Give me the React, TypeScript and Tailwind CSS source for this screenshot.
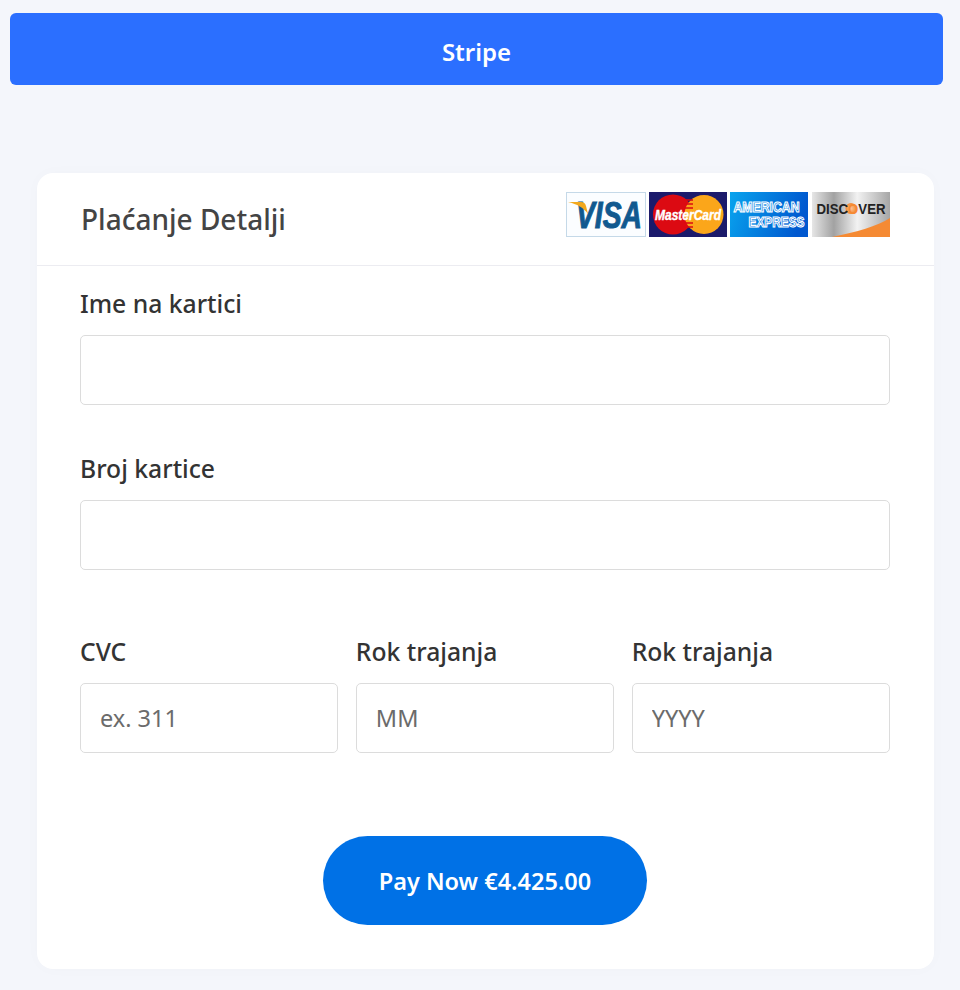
import React from "react";

function Visa() {
  return (
    <svg width="80" height="45" viewBox="0 0 80 45" className="block overflow-visible">
      <rect x="0.5" y="0.5" width="79" height="44" fill="#fbfdff" stroke="#c5d9e8" />
      <text x="43" y="36" textAnchor="middle" fontFamily="'Liberation Sans', sans-serif" fontWeight="700" fontStyle="italic" fontSize="36" textLength="66" lengthAdjust="spacingAndGlyphs" fill="#11598f" stroke="#11598f" strokeWidth="1">VISA</text>
      <path d="M2 10 H15 C18 10 19 11 20 14 L22 22 C18 16 11 12 2 10Z" fill="#f2a81d" />
    </svg>
  );
}

function MasterCard() {
  return (
    <svg width="78" height="45" viewBox="0 0 78 45" className="block overflow-visible">
      <rect width="78" height="45" fill="#1b1a6b" />
      <circle cx="24" cy="22.5" r="20" fill="#dc0a12" />
      <circle cx="55" cy="22.5" r="19.5" fill="#fba61a" />
      <path d="M35 8h9M35 12h9M35 16h9M35 31h9M35 35h9" stroke="#dc0a12" strokeWidth="1.6" />
      <text x="39" y="28" textAnchor="middle" fontFamily="'Liberation Sans', sans-serif" fontWeight="700" fontStyle="italic" fontSize="14" textLength="66" lengthAdjust="spacingAndGlyphs" fill="#ffffff" stroke="#ffffff" strokeWidth="0.4">MasterCard</text>
    </svg>
  );
}

function Amex() {
  return (
    <svg width="78" height="45" viewBox="0 0 78 45" className="block overflow-visible">
      <defs>
        <linearGradient id="amexbg" x1="0" y1="0" x2="1" y2="0.2">
          <stop offset="0" stopColor="#09a4ee" />
          <stop offset="1" stopColor="#0058cf" />
        </linearGradient>
      </defs>
      <rect width="78" height="45" fill="url(#amexbg)" />
      <text x="36.5" y="20" textAnchor="middle" fontFamily="'Liberation Sans', sans-serif" fontWeight="700" fontSize="14" textLength="66" lengthAdjust="spacingAndGlyphs" fill="#1283e4" stroke="#ffffff" strokeWidth="1.1">AMERICAN</text>
      <text x="46.5" y="35" textAnchor="middle" fontFamily="'Liberation Sans', sans-serif" fontWeight="700" fontSize="14" textLength="56" lengthAdjust="spacingAndGlyphs" fill="#0a6ddc" stroke="#ffffff" strokeWidth="1.1">EXPRESS</text>
    </svg>
  );
}

function Discover() {
  return (
    <svg width="78" height="45" viewBox="0 0 78 45" className="block overflow-visible">
      <defs>
        <linearGradient id="discbg" x1="0" y1="0" x2="1" y2="0">
          <stop offset="0" stopColor="#e6e6e6" />
          <stop offset="0.28" stopColor="#a2a2a2" />
          <stop offset="0.58" stopColor="#f2f2f2" />
          <stop offset="1" stopColor="#a6a6a6" />
        </linearGradient>
        <radialGradient id="discO">
          <stop offset="0" stopColor="#fbc596" />
          <stop offset="1" stopColor="#f58a33" />
        </radialGradient>
      </defs>
      <rect width="78" height="45" fill="url(#discbg)" />
      <path d="M20 45 C45 40 65 34 78 26 V45Z" fill="#f58a33" />
      <circle cx="39" cy="16.5" r="5.5" fill="url(#discO)" />
      <text x="39" y="21.5" textAnchor="middle" fontFamily="'Liberation Sans', sans-serif" fontWeight="700" fontSize="14" textLength="69" lengthAdjust="spacingAndGlyphs" fill="#222222">
        DISC<tspan fill="#f58a33">O</tspan>VER
      </text>
    </svg>
  );
}

function Field({ label, placeholder, className }: { label: string; placeholder?: string; className?: string }) {
  return (
    <label className={"block " + (className ?? "")}>
      <span className="block text-[24.7px] leading-[36px] font-medium text-[#333]">{label}</span>
      <input
        placeholder={placeholder}
        className="mt-[13px] block w-full h-[70px] rounded-[5px] border border-[#dcdcdc] bg-white px-[19px] text-[23.5px] text-[#333] placeholder:text-[#6b6b6b] outline-none"
      />
    </label>
  );
}

export default function App() {
  return (
    <div className="min-h-[990px] bg-[#f4f6fb] pt-[13px] font-['Noto_Sans','Open_Sans',sans-serif]">
      <button className="ml-[10px] block w-[933px] h-[72px] rounded-[6px] bg-[#2b6fff] pt-[6px] text-[24px] font-semibold text-white">
        Stripe
      </button>
      <div className="ml-[37px] mt-[88px] w-[897px] h-[796px] rounded-[16px] bg-white shadow-[0_0_16px_rgba(0,0,0,0.02)]">
        <div className="h-[93px] flex items-center justify-between pl-[44px] pr-[44px] border-b border-[#ececf1]">
          <h2 className="text-[28px] font-medium text-[#444]">Plaćanje Detalji</h2>
          <div className="flex gap-[3px] -mt-[10px]">
            <Visa />
            <MasterCard />
            <Amex />
            <div className="ml-[1px]">
              <Discover />
            </div>
          </div>
        </div>
        <div className="pl-[43px] pr-[44px] pt-[20px]">
          <Field label="Ime na kartici" />
          <Field label="Broj kartice" className="mt-[46px]" />
          <div className="mt-[64px] grid grid-cols-3 gap-[17.5px]">
            <Field label="CVC" placeholder="ex. 311" />
            <Field label="Rok trajanja" placeholder="MM" />
            <Field label="Rok trajanja" placeholder="YYYY" />
          </div>
          <div className="mt-[83px] flex justify-center">
            <button className="w-[324px] h-[89px] rounded-full bg-[#0071e6] pt-[2px] text-[23.5px] font-semibold text-white">
              Pay Now €4.425.00
            </button>
          </div>
        </div>
      </div>
    </div>
  );
}
